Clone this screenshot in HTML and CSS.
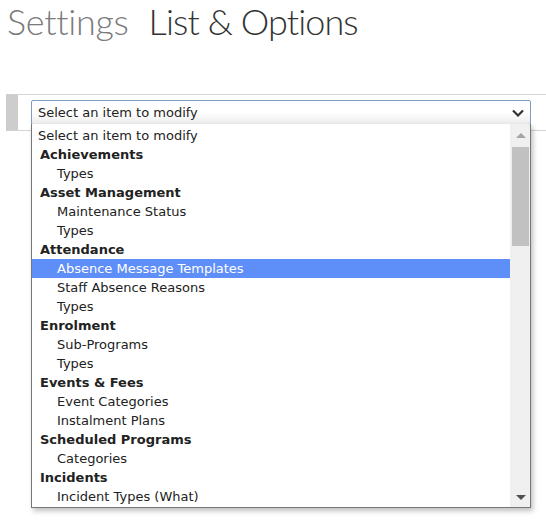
FILE: index.html
```html
<!DOCTYPE html>
<html>
<head>
<meta charset="utf-8">
<link rel="stylesheet" href="styles.css">
</head>
<body>
<h1 class="title"><span class="crumb">Settings</span><span class="page">List &amp; Options</span></h1>
<div class="panel">
  <div class="select-wrap">
    <div class="select">
      <span class="select-text">Select an item to modify</span>
      <svg class="chev" width="12" height="8" viewBox="0 0 12 8"><path d="M1 1.5 L6 6.5 L11 1.5" fill="none" stroke="#333" stroke-width="2.2"/></svg>
    </div>
    <div class="list">
      <div class="items">
        <div class="opt plain">Select an item to modify</div>
        <div class="opt grp">Achievements</div>
        <div class="opt sub">Types</div>
        <div class="opt grp">Asset Management</div>
        <div class="opt sub">Maintenance Status</div>
        <div class="opt sub">Types</div>
        <div class="opt grp">Attendance</div>
        <div class="opt sub sel">Absence Message Templates</div>
        <div class="opt sub">Staff Absence Reasons</div>
        <div class="opt sub">Types</div>
        <div class="opt grp">Enrolment</div>
        <div class="opt sub">Sub-Programs</div>
        <div class="opt sub">Types</div>
        <div class="opt grp">Events &amp; Fees</div>
        <div class="opt sub">Event Categories</div>
        <div class="opt sub">Instalment Plans</div>
        <div class="opt grp">Scheduled Programs</div>
        <div class="opt sub">Categories</div>
        <div class="opt grp">Incidents</div>
        <div class="opt sub">Incident Types (What)</div>
      </div>
      <div class="scrollbar">
        <div class="arrow up"></div>
        <div class="thumb"></div>
        <div class="track"></div>
        <div class="arrow down"></div>
      </div>
    </div>
  </div>
</div>
</body>
</html>
```
FILE: styles.css
```css
html, body {
  margin: 0;
  padding: 0;
  background: #fff;
}
body {
  min-height: 528px;
  font-family: "DejaVu Sans", Verdana, sans-serif;
}
.title {
  margin: 0;
  padding: 0 0 0 7px;
  height: 94px;
  font-family: Lato, "Open Sans", sans-serif;
  font-weight: 300;
  font-size: 36px;
  line-height: 42px;
  letter-spacing: -0.3px;
}
.crumb {
  color: #7b7b7b;
  margin-right: 20px;
}
.page {
  color: #333;
  letter-spacing: -0.9px;
}
.panel {
  margin-left: 6px;
  border-top: 1px solid #d4d4d4;
  border-bottom: 1px solid #d4d4d4;
  border-left: 12px solid #cdcdcd;
  padding: 5px 0 0 13px;
  box-sizing: border-box;
  height: 37px;
}
.select-wrap {
  position: relative;
  width: 500px;
}
.select {
  height: 25px;
  box-sizing: border-box;
  border: 1px solid #7d9dbd;
  border-radius: 2px;
  background: linear-gradient(#ffffff 0%, #ffffff 50%, #ececec 100%);
  display: flex;
  align-items: center;
  justify-content: space-between;
  padding: 0 6px 0 6px;
  font-size: 13px;
  color: #222;
}
.list {
  position: absolute;
  top: 24px;
  left: 0;
  width: 500px;
  height: 384px;
  box-sizing: border-box;
  border: 1px solid #767676;
  border-top: none;
  background: #fff;
  display: flex;
  box-shadow: 2px 3px 5px rgba(0,0,0,0.25);
  z-index: 5;
}
.items {
  flex: 1;
  padding-top: 2px;
}
.opt {
  height: 19px;
  line-height: 19px;
  font-size: 13px;
  color: #222;
  white-space: nowrap;
}
.plain {
  padding-left: 6px;
}
.grp {
  padding-left: 8px;
  font-weight: bold;
}
.sub {
  padding-left: 25px;
}
.sel {
  background: #5e8ef8;
  color: #fff;
}
.scrollbar {
  width: 20px;
  background: #f0f0f0;
  display: flex;
  flex-direction: column;
}
.arrow {
  display: flex;
  align-items: center;
  justify-content: center;
}
.arrow.up {
  height: 23px;
  padding-left: 1px;
}
.arrow.down {
  height: 20px;
  padding-left: 1px;
}
.arrow.up::before {
  content: "";
  border-left: 5px solid transparent;
  border-right: 5px solid transparent;
  border-bottom: 5px solid #a3a3a3;
}
.arrow.down::before {
  content: "";
  border-left: 5px solid transparent;
  border-right: 5px solid transparent;
  border-top: 5px solid #505050;
}
.thumb {
  height: 99px;
  margin: 0 1px 0 2px;
  background: #c1c1c1;
}
.track {
  flex: 1;
}
```
